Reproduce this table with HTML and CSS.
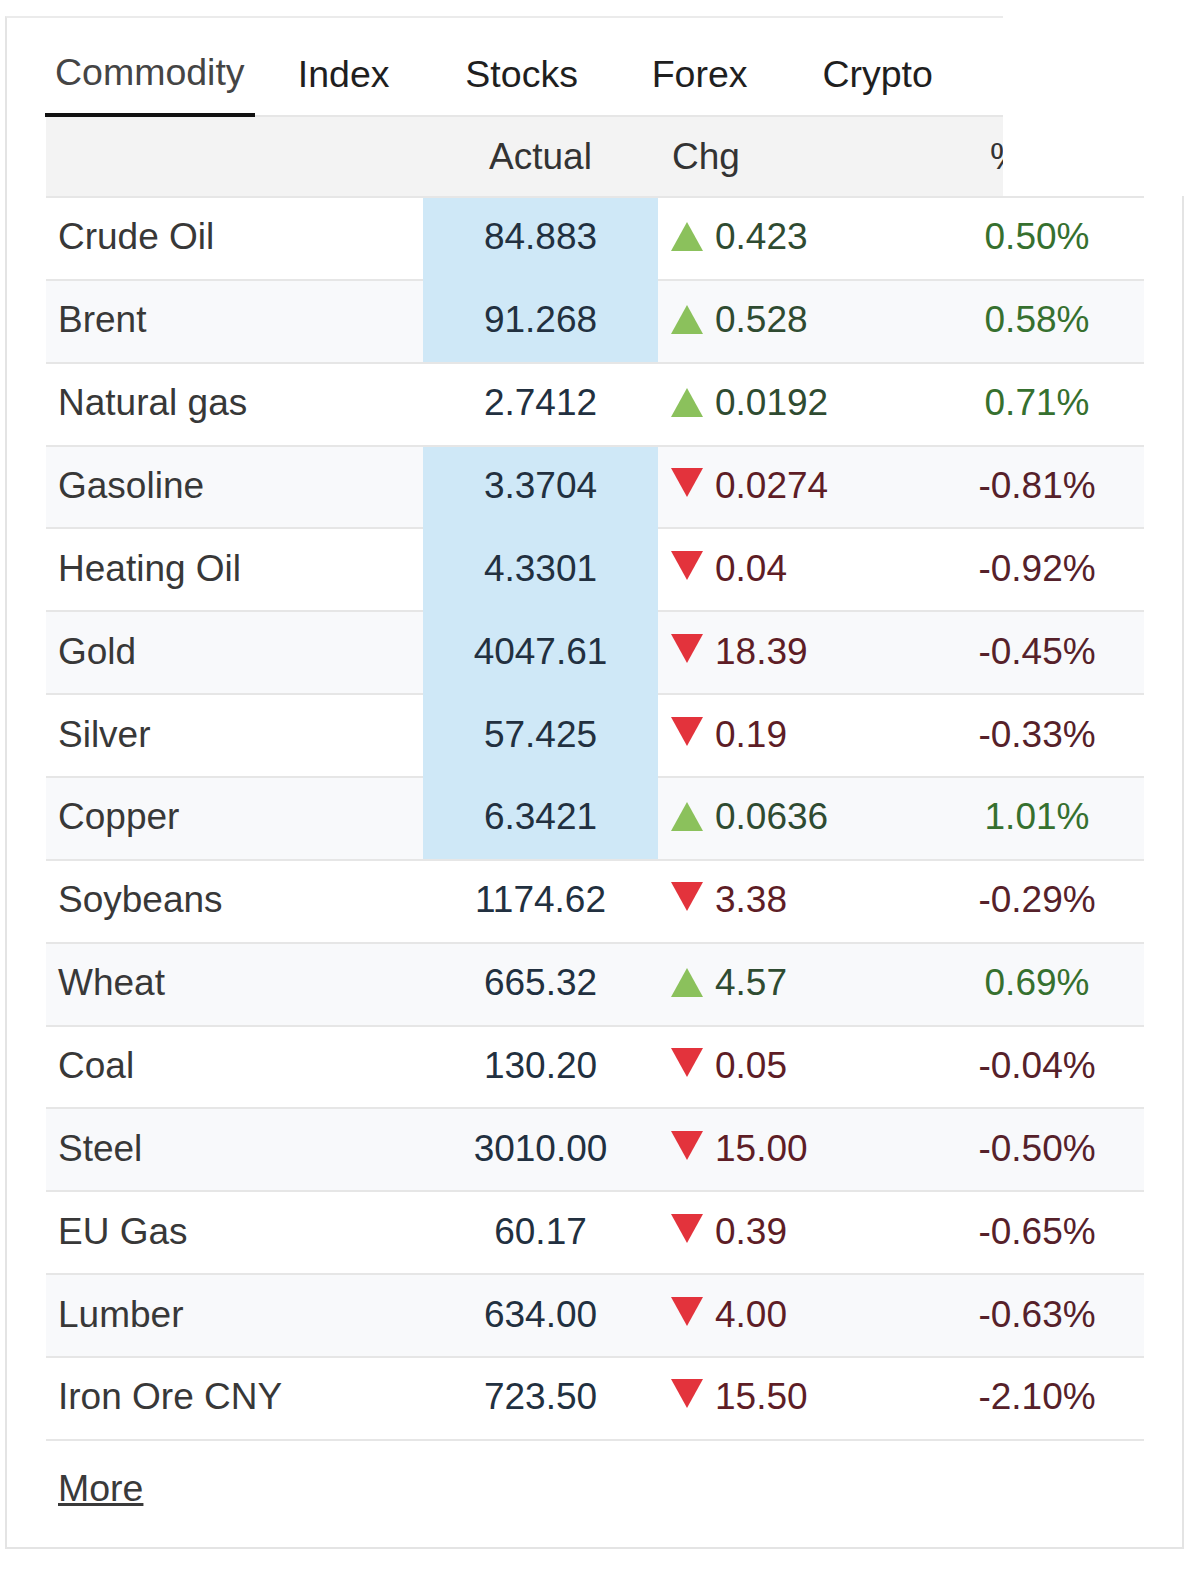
FILE: index.html
```html
<!DOCTYPE html>
<html lang="en">
<head>
<meta charset="utf-8">
<title>Commodity</title>
<link rel="stylesheet" href="styles.css">
</head>
<body>
<div class="widget">
  <div class="top">
    <nav class="tabs">
      <a class="tab active">Commodity</a>
      <a class="tab">Index</a>
      <a class="tab">Stocks</a>
      <a class="tab">Forex</a>
      <a class="tab">Crypto</a>
    </nav>
    <div class="grid head">
      <span class="cell c-name"></span>
      <span class="cell c-act">Actual</span>
      <span class="cell c-chg">Chg</span>
      <span class="cell c-pct">%</span>
    </div>
  </div>
  <div class="body">
    <div class="rows">
      <div class="grid row"><span class="cell c-name">Crude Oil</span><span class="cell c-act hl">84.883</span><span class="cell c-chg up"><svg class="tri" viewBox="0 0 32 29"><polygon points="0,29 16,0 32,29"/></svg>0.423</span><span class="cell c-pct up">0.50%</span></div>
      <div class="grid row alt"><span class="cell c-name">Brent</span><span class="cell c-act hl cont">91.268</span><span class="cell c-chg up"><svg class="tri" viewBox="0 0 32 29"><polygon points="0,29 16,0 32,29"/></svg>0.528</span><span class="cell c-pct up">0.58%</span></div>
      <div class="grid row"><span class="cell c-name">Natural gas</span><span class="cell c-act">2.7412</span><span class="cell c-chg up"><svg class="tri" viewBox="0 0 32 29"><polygon points="0,29 16,0 32,29"/></svg>0.0192</span><span class="cell c-pct up">0.71%</span></div>
      <div class="grid row alt"><span class="cell c-name">Gasoline</span><span class="cell c-act hl">3.3704</span><span class="cell c-chg down"><svg class="tri" viewBox="0 0 32 29"><polygon points="0,0 32,0 16,29"/></svg>0.0274</span><span class="cell c-pct down">-0.81%</span></div>
      <div class="grid row"><span class="cell c-name">Heating Oil</span><span class="cell c-act hl cont">4.3301</span><span class="cell c-chg down"><svg class="tri" viewBox="0 0 32 29"><polygon points="0,0 32,0 16,29"/></svg>0.04</span><span class="cell c-pct down">-0.92%</span></div>
      <div class="grid row alt"><span class="cell c-name">Gold</span><span class="cell c-act hl cont">4047.61</span><span class="cell c-chg down"><svg class="tri" viewBox="0 0 32 29"><polygon points="0,0 32,0 16,29"/></svg>18.39</span><span class="cell c-pct down">-0.45%</span></div>
      <div class="grid row"><span class="cell c-name">Silver</span><span class="cell c-act hl cont">57.425</span><span class="cell c-chg down"><svg class="tri" viewBox="0 0 32 29"><polygon points="0,0 32,0 16,29"/></svg>0.19</span><span class="cell c-pct down">-0.33%</span></div>
      <div class="grid row alt"><span class="cell c-name">Copper</span><span class="cell c-act hl cont">6.3421</span><span class="cell c-chg up"><svg class="tri" viewBox="0 0 32 29"><polygon points="0,29 16,0 32,29"/></svg>0.0636</span><span class="cell c-pct up">1.01%</span></div>
      <div class="grid row"><span class="cell c-name">Soybeans</span><span class="cell c-act">1174.62</span><span class="cell c-chg down"><svg class="tri" viewBox="0 0 32 29"><polygon points="0,0 32,0 16,29"/></svg>3.38</span><span class="cell c-pct down">-0.29%</span></div>
      <div class="grid row alt"><span class="cell c-name">Wheat</span><span class="cell c-act">665.32</span><span class="cell c-chg up"><svg class="tri" viewBox="0 0 32 29"><polygon points="0,29 16,0 32,29"/></svg>4.57</span><span class="cell c-pct up">0.69%</span></div>
      <div class="grid row"><span class="cell c-name">Coal</span><span class="cell c-act">130.20</span><span class="cell c-chg down"><svg class="tri" viewBox="0 0 32 29"><polygon points="0,0 32,0 16,29"/></svg>0.05</span><span class="cell c-pct down">-0.04%</span></div>
      <div class="grid row alt"><span class="cell c-name">Steel</span><span class="cell c-act">3010.00</span><span class="cell c-chg down"><svg class="tri" viewBox="0 0 32 29"><polygon points="0,0 32,0 16,29"/></svg>15.00</span><span class="cell c-pct down">-0.50%</span></div>
      <div class="grid row"><span class="cell c-name">EU Gas</span><span class="cell c-act">60.17</span><span class="cell c-chg down"><svg class="tri" viewBox="0 0 32 29"><polygon points="0,0 32,0 16,29"/></svg>0.39</span><span class="cell c-pct down">-0.65%</span></div>
      <div class="grid row alt"><span class="cell c-name">Lumber</span><span class="cell c-act">634.00</span><span class="cell c-chg down"><svg class="tri" viewBox="0 0 32 29"><polygon points="0,0 32,0 16,29"/></svg>4.00</span><span class="cell c-pct down">-0.63%</span></div>
      <div class="grid row"><span class="cell c-name">Iron Ore CNY</span><span class="cell c-act">723.50</span><span class="cell c-chg down"><svg class="tri" viewBox="0 0 32 29"><polygon points="0,0 32,0 16,29"/></svg>15.50</span><span class="cell c-pct down">-2.10%</span></div>
    </div>
    <div class="more-wrap"><a class="more" href="#">More</a></div>
  </div>
</div>
</body>
</html>
```

FILE: styles.css
```css
html, body {
  margin: 0;
  padding: 0;
  background: #ffffff;
}

body {
  font-family: "Liberation Sans", Arial, sans-serif;
  color: #333333;
}

.widget {
  margin: 16px 0 0 5px;
  width: 1179px;
}

.top {
  width: 998px;
  box-sizing: border-box;
  border-top: 2px solid #ebebeb;
  border-left: 2px solid #e4e4e4;
  overflow: hidden;
  background: #ffffff;
}

.tabs {
  display: flex;
  height: 97px;
  margin-left: 38px;
  border-bottom: 2px solid #e6e6e6;
}

.tab {
  box-sizing: border-box;
  height: 99px;
  margin-bottom: -2px;
  min-width: 178px;
  padding: 35px 10px 0;
  text-align: center;
  font-size: 37.5px;
  line-height: 43px;
  color: #1f1f1f;
  white-space: nowrap;
}

.tab.active {
  padding-top: 33px;
  color: #454545;
  border-bottom: 4px solid #111111;
}

.grid {
  display: grid;
  grid-template-columns: 377px 235px 272px 214px;
  width: 1098px;
}

.head {
  margin-left: 39px;
  height: 79px;
  background: #f3f3f3;
}

.head .cell {
  display: flex;
  align-items: center;
  font-size: 37px;
  line-height: 43px;
  color: #333333;
  white-space: nowrap;
}

.head .c-act {
  justify-content: center;
}

.head .c-chg {
  padding-left: 14px;
}

.head .c-pct {
  padding-left: 60px;
}

.body {
  box-sizing: border-box;
  width: 1179px;
  padding: 0 38px 0 39px;
  border-left: 2px solid #e4e4e4;
  border-right: 2px solid #e4e4e4;
  border-bottom: 2px solid #e4e4e4;
}

.rows {
  border-bottom: 2px solid #e6e6e6;
}

.row {
  height: 82.87px;
  background: #ffffff;
}

.row.alt {
  background: #f8f9fb;
}

.row .cell {
  box-sizing: border-box;
  display: flex;
  align-items: center;
  height: 82.87px;
  padding-bottom: 3px;
  border-top: 2px solid #e6e6e6;
  font-size: 37px;
  line-height: 43px;
  white-space: nowrap;
}

.row .c-name {
  padding-left: 12px;
  color: #383838;
}

.row .c-act {
  justify-content: center;
  color: #223040;
}

.row .c-act.hl {
  background: #cfe8f7;
}

.row .c-act.hl.cont {
  border-top-color: #cfe8f7;
}

.row .c-chg {
  padding-left: 13px;
  gap: 12px;
}

.row .c-pct {
  justify-content: center;
}

.tri {
  width: 32px;
  height: 29px;
  flex: none;
}

.c-chg.up {
  color: #2f4b31;
}

.c-chg.up .tri {
  fill: #8bc15c;
}

.c-chg.down {
  color: #5e1d26;
}

.c-chg.down .tri {
  margin-top: -6px;
  fill: #e3333c;
}

.c-pct.up {
  color: #36702f;
}

.c-pct.down {
  color: #56212a;
}

.more-wrap {
  padding: 26px 0 30px 12px;
  line-height: 43px;
}

.more {
  font-size: 37.5px;
  color: #3a3a3a;
  text-decoration: underline;
}
```
